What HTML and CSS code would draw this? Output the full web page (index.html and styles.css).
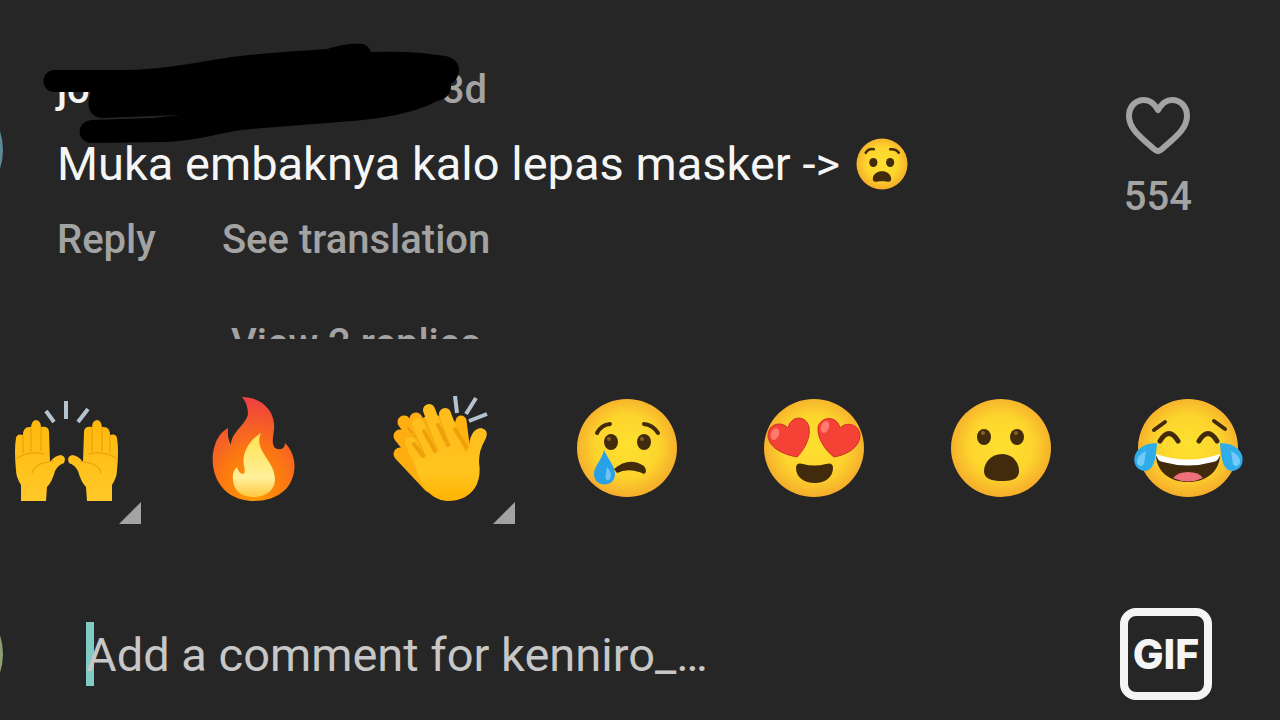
FILE: index.html
```html
<!DOCTYPE html>
<html lang="id">
	<head>
		<meta charset="utf-8" />
		<meta name="viewport" content="width=device-width,initial-scale=1" />
		<title>Comments</title>
		<link rel="stylesheet" href="styles.css">
	</head>
	<body>
		<main class="page">
			<section class="thread">
				<article class="comment">
					<span class="avatar"></span>
					<div class="comment-body">
						<header class="meta">
							<span class="name">jo</span>
							<time class="time">3d</time>
							<svg class="scribble" viewBox="0 0 420 104" aria-hidden="true">
								<path d="M12 27H80C120 27 150 20 190 14C230 9 260 8 285 6C300 1 312 0 321 1Q327 3 329 9Q355 8 380 10L395 12Q417 13 417 27Q417 36 409 41Q410 55 395 58C375 69 345 75 310 78L210 86C180 88 160 98 120 99L50 100C34 100 33 78 50 77L110 75L138 72L60 75C46 74 44 60 49 49L12 49C-2 48-2 28 12 27Z"/>
							</svg>
						</header>
						<p class="text">Muka embaknya kalo lepas masker -&gt;
							<svg class="inline-emoji" viewBox="8 7 104 102" role="img" aria-label="anguished face">
								<circle cx="60" cy="58" r="50" fill="url(#face)"/>
								<g fill="#422b0d"><ellipse cx="43" cy="55" rx="8" ry="9"/><ellipse cx="76" cy="55" rx="8" ry="9"/><path d="M42 87C43 67 77 67 78 87C78 97 68 91 60 92C52 91 42 97 42 87Z"/></g>
								<path d="M28 36Q34 27 44 29M76 29Q88 28 93 36" fill="none" stroke="#422b0d" stroke-width="5" stroke-linecap="round"/>
							</svg>
						</p>
						<div class="actions">
							<button type="button">Reply</button>
							<button type="button">See translation</button>
						</div>
						<button type="button" class="replies">View 2 replies</button>
					</div>
					<button type="button" class="like" aria-label="Like, 554">
						<svg viewBox="0 0 66 60" aria-hidden="true">
							<path d="M33 14C29 7 24 4 19 4C10 4 4 11 4 20C4 32 14 40 29 53Q33 57 37 53C52 40 62 32 62 20C62 11 56 4 47 4C42 4 37 7 33 14Z"/>
						</svg>
						<span>554</span>
					</button>
				</article>
			</section>

			<section class="reactions" aria-label="Quick reactions">
				<button type="button" class="more" aria-label="Raising hands">
					<svg viewBox="0 0 120 120">
						<defs>
							<radialGradient id="face" cx="50%" cy="48%" r="52%">
								<stop offset="0" stop-color="#fde030"/>
								<stop offset=".6" stop-color="#fdd52d"/>
								<stop offset="1" stop-color="#f5ad2b"/>
							</radialGradient>
							<linearGradient id="skin" x1="0" y1="0" x2="0" y2="1">
								<stop offset="0" stop-color="#ffb80c"/>
								<stop offset="1" stop-color="#ffc928"/>
							</linearGradient>
							<linearGradient id="palm" x1="0" y1="0" x2="0" y2="1">
								<stop offset="0" stop-color="#ffbe1c"/>
								<stop offset=".6" stop-color="#ffc420"/>
								<stop offset="1" stop-color="#ffb300"/>
							</linearGradient>
							<g id="hand">
								<path d="M15 111V95Q10 87 10 80Q8 60 10 48Q11 43 17 45Q17 36 25 37Q26 30 30 30Q35 31 35 37Q43 36 43 42L44 72Q48 66 55 65Q61 67 58 73Q52 75 49 81Q46 92 41 97L40 111Z" fill="url(#skin)"/>
								<path d="M17 45V63M25 38V61M35 38V61M11 68Q24 60 38 64M26 83C28 74 37 73 47 71" fill="none" stroke="#e59a0b" stroke-width="1" stroke-linecap="round"/>
							</g>
						</defs>
						<use href="#hand"/>
						<use href="#hand" transform="translate(121 0) scale(-1 1)"/>
						<path d="M40 21L48 32M60 11V29M82 19L72 32" stroke="#b4c3d0" stroke-width="4"/>
					</svg>
				</button>
				<button type="button" aria-label="Fire">
					<svg viewBox="0 0 120 120">
						<defs>
							<radialGradient id="flame" cx="50%" cy="92%" r="88%">
								<stop offset="0" stop-color="#ff9a00"/>
								<stop offset=".5" stop-color="#fb7613"/>
								<stop offset="1" stop-color="#ef4440"/>
							</radialGradient>
							<linearGradient id="core" x1="0" y1="0" x2="0" y2="1">
								<stop offset="0" stop-color="#ffe24c"/>
								<stop offset=".7" stop-color="#fff09a"/>
								<stop offset="1" stop-color="#ffc83e"/>
							</linearGradient>
						</defs>
						<path d="M49 7C66 7 80 18 81 34C82 43 77 52 82 58C88 61 92 58 92 53C106 67 103 88 93 99C84 108 72 111 61 111C43 111 29 102 23 87C16 70 20 46 35 38Q34 48 38 55C38 42 53 35 55 24Q55 14 49 7Z" fill="url(#flame)"/>
						<path d="M68 43C60 61 82 70 82 90C81 102 71 107 61 107C48 107 41 101 40 90Q39 81 44 77Q46 84 50 84Q53 83 51 76C48 62 58 49 68 43Z" fill="url(#core)"/>
					</svg>
				</button>
				<button type="button" class="more" aria-label="Clapping hands">
					<svg viewBox="0 0 120 120">
						<path d="M24 32L55 75M20 46L48 80M20 64L50 96M36 29L55 65" stroke="#ffae12" stroke-width="13" stroke-linecap="round"/>
						<path d="M28 38L35 46M26 55L36 69" stroke="#f09c08" stroke-width="2" stroke-linecap="round"/>
						<path d="M30 48L39 30L50 24L66 27L80 34L90 60L62 75L40 72Z" fill="#f5aa10"/>
						<path d="M81 31L84 54" stroke="#ffb210" stroke-width="11" stroke-linecap="round"/>
						<path d="M31 53L48 90M38 34L60 82M49 20L70 75M65 24L84 75" stroke="#ffbe1c" stroke-width="12" stroke-linecap="round"/>
						<path d="M35 70L46 66L58 61L71 56L82 64Q89 61 89 55Q91 39 101 38Q110 40 105 50Q99 60 99 72Q101 84 97 94Q89 111 67 111Q53 110 44 97Q35 82 35 70Z" fill="url(#palm)"/>
						<path d="M34 54L43 66M44 41L55 61M58 35L68 55M75 39L86 57" stroke="#eda009" stroke-width="4" stroke-linecap="round"/>
						<path d="M75 6L77 23M96 8L86 24M107 24L89 31" stroke="#b4c3d0" stroke-width="4"/>
					</svg>
				</button>
				<button type="button" aria-label="Crying face">
					<svg viewBox="0 0 120 120">
						<ellipse cx="60" cy="58" rx="50" ry="49" fill="url(#face)"/>
						<g fill="#422b0d"><ellipse cx="44" cy="52" rx="7" ry="8"/><ellipse cx="77" cy="52" rx="7" ry="8"/><path d="M47 79Q62 66 77 76Q81 82 77 84Q62 77 50 83Z"/></g>
						<path d="M30 43Q34 35 43 34M77 34Q86 35 91 43" fill="none" stroke="#422b0d" stroke-width="4" stroke-linecap="round"/>
						<path d="M37 60C41 69 48 76 48 84C48 98 27 98 27 84C27 76 35 70 37 60Z" fill="#29a1e8"/>
						<path d="M40 77Q47 84 42 90Q37 91 39 84Z" fill="#70c5f4"/>
						<g fill="#896024"><circle cx="42" cy="49" r="2"/><circle cx="75" cy="49" r="2"/></g>
					</svg>
				</button>
				<button type="button" aria-label="Heart eyes">
					<svg viewBox="0 0 120 120">
						<ellipse cx="60" cy="58" rx="50" ry="49" fill="url(#face)"/>
						<path d="M43 67C32 65 15 59 14 46C14 33 28 31 34 38C37 25 52 25 55 37C57 49 49 61 43 67Z" fill="#f44336" stroke="#cf3027" stroke-width="1"/>
						<ellipse cx="21" cy="44" rx="4" ry="6" transform="rotate(20 21 44)" fill="#ff7b70"/>
						<path d="M80 67C91 65 105 59 106 46C106 34 92 31 86 38C83 25 67 26 64 37C63 49 72 61 80 67Z" fill="#f44336" stroke="#cf3027" stroke-width="1"/>
						<ellipse cx="71" cy="37" rx="4" ry="6" transform="rotate(20 71 37)" fill="#ff7b70"/>
						<path d="M42 78Q42 72 49 74Q60 77 72 74Q79 72 79 78C79 87 71 93 61 93C50 93 42 87 42 78Z" fill="#422b0d"/>
					</svg>
				</button>
				<button type="button" aria-label="Surprised face">
					<svg viewBox="0 0 120 120">
						<ellipse cx="60" cy="58" rx="50" ry="49" fill="url(#face)"/>
						<g fill="#422b0d"><ellipse cx="43" cy="47" rx="7" ry="8"/><ellipse cx="76" cy="47" rx="7" ry="8"/><path d="M61 64C72 64 78 73 78 81C78 89 71 91 61 91C51 91 43 89 43 81C43 73 50 64 61 64Z"/></g>
						<g fill="#896024"><circle cx="42" cy="43" r="2"/><circle cx="75" cy="43" r="2"/></g>
					</svg>
				</button>
				<button type="button" aria-label="Tears of joy">
					<svg viewBox="0 0 120 120">
						<ellipse cx="60" cy="58" rx="50" ry="49" fill="url(#face)"/>
						<path d="M32 51Q41 36 50 51M71 51Q80 36 89 51" fill="none" stroke="#422b0d" stroke-width="5" stroke-linecap="round"/>
						<path d="M26 40L37 32M86 31L97 39" fill="none" stroke="#422b0d" stroke-width="4" stroke-linecap="round"/>
						<path d="M28 66Q60 76 92 66C91 82 78 92 60 92C42 92 29 82 28 66Z" fill="#422b0d"/>
						<path d="M28 64Q60 75 92 64Q91 71 85 72Q60 79 35 72Q29 71 28 64Z" fill="#fff"/>
						<path d="M45 88Q50 82 60 82Q71 82 75 88Q60 95 45 88Z" fill="#ee707b"/>
						<path d="M29 53C28 66 27 80 17 81C4 80 4 65 11 59Q17 53 29 53ZM92 53C93 66 94 80 104 81C117 80 117 65 110 59Q104 53 92 53Z" fill="#30ace8"/>
						<path d="M18 61Q8 66 9 73Q12 79 16 74ZM103 61Q113 66 112 73Q109 79 105 74Z" fill="#72cafa"/>
					</svg>
				</button>
			</section>

			<form class="composer">
				<span class="avatar"></span>
				<div class="field">
					<span class="caret"></span>
					<input type="text" aria-label="Add a comment" placeholder="Add a comment for kenniro_…">
				</div>
				<button type="button" class="gif">GIF</button>
			</form>
		</main>
	</body>
</html>
```
FILE: styles.css
```css
*{margin: 0;padding: 0;box-sizing: border-box;}
body{
	background: #262626;
	color: #f5f5f5;
	font-family: Roboto, "Liberation Sans", sans-serif;
	overflow: hidden;
}
button{
	border: 0;
	background: none;
	color: #a3a3a3;
	font: inherit;
	cursor: pointer;
}
svg{display: block;}
.page{
	display: flex;
	flex-direction: column;
	min-height: 100vh;
}

/* comment */
.thread{
	height: 339px;
	overflow: hidden;
}
.comment{
	display: flex;
	padding: 66px 88px 0 0;
}
.avatar{
	flex: none;
	width: 120px;
	height: 120px;
	margin: 24px 54px 0 -117px;
	border-radius: 50%;
	background: #5f8799;
}
.comment-body{
	flex: 1;
	font-size: 40px;
	font-weight: 500;
	line-height: 48px;
}
.meta{
	position: relative;
	display: flex;
	justify-content: space-between;
	width: 430px;
}
.time{color: #a3a3a3;}
.scribble{
	position: absolute;
	top: -23px;
	left: -15px;
	width: 420px;
	height: 104px;
}
.text{
	margin: 22px 0 24px;
	font-size: 47px;
	font-weight: 400;
	line-height: 56px;
	white-space: nowrap;
}
.inline-emoji{
	display: inline-block;
	width: 54px;
	height: 52px;
	margin-left: 3px;
	vertical-align: -10px;
}
.actions{
	display: flex;
	gap: 66px;
}
.replies{
	display: block;
	margin: 56px 0 0 174px;
}
.like{
	display: flex;
	flex-direction: column;
	align-items: center;
	align-self: flex-start;
	gap: 17px;
	margin-top: 30px;
	font-size: 40px;
	font-weight: 500;
	line-height: 48px;
}
.like svg{
	width: 66px;
	height: 60px;
	fill: none;
	stroke: #a3a3a3;
	stroke-width: 6;
	stroke-linejoin: round;
}

/* emoji bar, runs past both edges */
.reactions{
	display: grid;
	grid-template-columns: repeat(7, 1fr);
	margin: 0 -1px 0 -28px;
	padding: 51px 0 30px;
}
.reactions button{
	position: relative;
	display: flex;
	justify-content: center;
	padding-bottom: 14px;
}
.reactions svg{
	width: 120px;
	height: 120px;
}
.more::after{
	content: "";
	position: absolute;
	right: 18px;
	bottom: 0;
	width: 22px;
	height: 22px;
	background: #a3a3a3;
	clip-path: polygon(100% 0, 100% 100%, 0 100%);
}

/* input row */
.composer{
	flex: 1;
	display: flex;
	align-items: center;
	padding: 40px 68px 0 0;
}
.composer .avatar{
	margin: 0 83px 0 -117px;
	background: #8d9f72;
}
.field{
	position: relative;
	flex: 1;
}
.caret{
	position: absolute;
	left: 0;
	top: 0;
	width: 8px;
	height: 64px;
	background: #80cbc4;
}
.field input{
	position: relative;
	display: block;
	width: 100%;
	height: 64px;
	border: 0;
	outline: 0;
	background: none;
	color: #f5f5f5;
	font: 400 47px Roboto, "Liberation Sans", sans-serif;
}
.field input::placeholder{
	color: #c7c7c7;
	opacity: 1;
}
.gif{
	width: 92px;
	height: 92px;
	border: 8px solid #f5f5f5;
	border-radius: 16px;
	color: #f5f5f5;
	font: 800 41px Inter, "Liberation Sans", sans-serif;
}
.composer .avatar,
.composer .gif,
.field{
	margin-bottom: 6px;
}
```
